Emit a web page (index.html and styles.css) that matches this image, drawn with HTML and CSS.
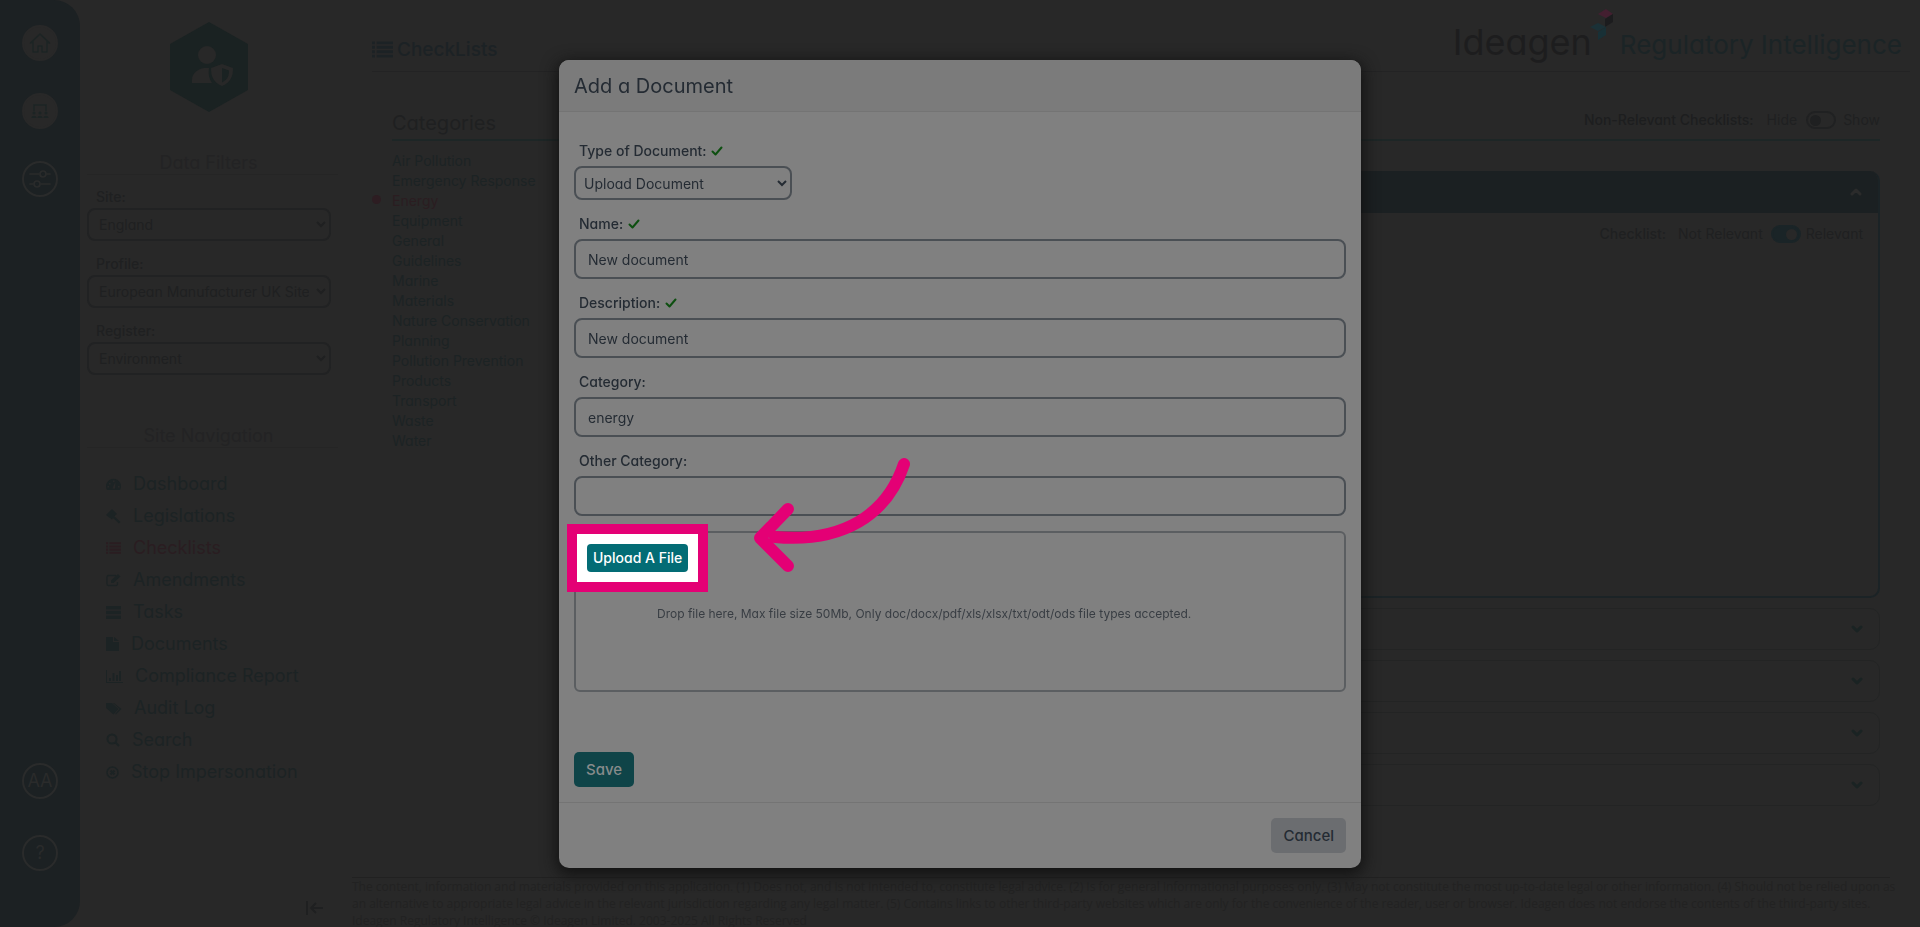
FILE: index.html
```html
<!DOCTYPE html>
<html lang="en">
<head>
<meta charset="utf-8">
<title>CheckLists - Add a Document</title>
<link rel="stylesheet" href="styles.css">
</head>
<body>
<svg class="defs" aria-hidden="true">
  <symbol id="i-list" viewBox="0 0 22 17"><path d="M0 0h3v3H0zM5 0h17v3H5zM0 4.700h3v3H0zM5 4.700h17v3H5zM0 9.400h3v3H0zM5 9.400h17v3H5zM0 14h3v3H0zM5 14h17v3H5z"/></symbol>
  <symbol id="i-down" viewBox="0 0 12 8"><path d="M2 2l4 4 4-4" fill="none" stroke="currentColor" stroke-width="3" stroke-linecap="round" stroke-linejoin="round"/></symbol>
  <symbol id="i-check" viewBox="0 0 12 10"><path d="M1.500 5.500l3 3 6-7" fill="none" stroke="currentColor" stroke-width="2" stroke-linecap="round" stroke-linejoin="round"/></symbol>
</svg>

<div class="app">
  <nav class="rail" aria-label="Applications">
    <a class="disc disc-solid" href="#" aria-label="Home"><svg width="22" height="22" viewBox="0 0 22 22" fill="none" stroke="currentColor" stroke-width="1.500" stroke-linejoin="round" stroke-linecap="round"><path d="M4 9.500L1.500 11 11 2l9.500 9L18 9.500M4 9.500V20h5v-6h4v6h5V9.500"/></svg></a>
    <a class="disc disc-solid" href="#" aria-label="Meetings"><svg width="18" height="16" viewBox="0 0 18 16" fill="none" stroke="currentColor" stroke-width="1.500"><path d="M3 8V2h12v6"/><g fill="currentColor" stroke="none"><circle cx="3" cy="10" r="1.500"/><circle cx="9" cy="10" r="1.500"/><circle cx="15" cy="10" r="1.500"/><path d="M.5 15c0-3 5-3 5 0zM6.500 15c0-3 5-3 5 0zM12.500 15c0-3 5-3 5 0z"/></g></svg></a>
    <a class="disc" href="#" aria-label="Settings"><svg width="22" height="18" viewBox="0 0 22 18" fill="none" stroke="currentColor" stroke-width="1.700" stroke-linecap="round"><path d="M1 4h9M18 4h3M1 14h3M12 14h9"/><circle cx="14" cy="4" r="3"/><circle cx="8" cy="14" r="3"/></svg></a>
    <a class="disc disc-user" href="#">AA</a>
    <a class="disc disc-help" href="#">?</a>
  </nav>

  <aside class="side">
    <svg class="badge" width="78" height="90" viewBox="0 0 78 90"><path class="badge-bg" d="M39 0l39 22v46L39 90 0 68V22z"/><g class="badge-fg"><circle cx="37" cy="33" r="9"/><path d="M22 61v-3c0-7 6-11 12-12h5c-1 6 0 11 3 15z"/><path d="M52 42l11 4c0 8-2 14-11 18-9-4-11-10-11-18z"/></g><path class="badge-bg" d="M52 46l7 2.500c0 5-1 9-7 12z"/></svg>
    <h2 class="side-title">Data Filters</h2>
    <form class="filters">
      <label for="site">Site:</label>
      <select id="site"><option>England</option></select>
      <label for="profile">Profile:</label>
      <select id="profile"><option>European Manufacturer UK Site</option></select>
      <label for="register">Register:</label>
      <select id="register"><option>Environment</option></select>
    </form>
    <h2 class="side-title side-title-nav">Site Navigation</h2>
    <ul class="nav">
      <li><a href="#"><svg width="15" height="13" viewBox="0 0 15 13"><path fill-rule="evenodd" d="M1 12a7.500 7.500 0 1 1 13 0zM6.500 10.500h2.500L9.500 4l-2 4zM3 5h1.500v1.500H3zM7 2.500h1.500V4H7zM1.500 8H3v1.500H1.500zM12 8h1.500v1.500H12z"/></svg>Dashboard</a></li>
      <li><a href="#"><svg width="15" height="15" viewBox="0 0 15 15"><path d="M6 0l5 5-1.500 1L8.500 7.500 14.500 13 13 14.500 7 9l-1 1.500L0 6z"/></svg>Legislations</a></li>
      <li><a class="current" href="#"><svg width="15" height="12"><use href="#i-list"/></svg>Checklists</a></li>
      <li><a href="#"><svg width="15" height="13" viewBox="0 0 15 13"><path d="M10 1.500H2.500a1.500 1.500 0 0 0-1.500 1.500v7a1.500 1.500 0 0 0 1.500 1.500h7.500a1.500 1.500 0 0 0 1.500-1.500V8" fill="none" stroke="currentColor" stroke-width="1.300"/><path d="M5 9V6.500L12 0l2.500 2.500L7.500 9z"/></svg>Amendments</a></li>
      <li><a href="#"><svg width="15" height="13" viewBox="0 0 15 13"><path d="M0 0h15v3.500H0zM0 4.700h15v3.500H0zM0 9.400h15v3.500H0z"/></svg>Tasks</a></li>
      <li><a href="#"><svg width="13" height="14" viewBox="0 0 13 14"><path d="M0 0h7v5h6v9H0zM8 0l5 4H8z"/></svg>Documents</a></li>
      <li><a href="#"><svg width="17" height="13" viewBox="0 0 17 13"><path d="M0 0h1v12h16v1H0zM3 8h2v3H3zM6.500 3h2v8h-2zM10 5h2v6h-2zM13 1h2v10h-2z"/></svg>Compliance Report</a></li>
      <li><a href="#"><svg width="16" height="13" viewBox="0 0 16 13"><path d="M0 1h6l6.500 6-5 5.500L0 6zM8 1l7.500 6-5.500 5.500-1-.5L13.500 7 7 1z"/></svg>Audit Log</a></li>
      <li><a href="#"><svg width="14" height="14" viewBox="0 0 14 14" fill="none" stroke="currentColor" stroke-width="2"><circle cx="6" cy="6" r="4.500"/><path d="M9.500 9.500L13 13"/></svg>Search</a></li>
      <li><a href="#"><svg width="13" height="13" viewBox="0 0 13 13" fill="none" stroke="currentColor" stroke-width="1.500"><circle cx="6.500" cy="6.500" r="5.500"/><path d="M4.500 4.500l4 4M8.500 4.500l-4 4" stroke-width="2"/></svg>Stop Impersonation</a></li>
    </ul>
    <button class="collapse" type="button" aria-label="Collapse menu"><svg width="17" height="14" viewBox="0 0 17 14" fill="none" stroke="currentColor" stroke-width="1.800"><path d="M1 0v14M17 7H5M10 2L5 7l5 5"/></svg></button>
  </aside>

  <main class="main">
    <header class="top">
      <h1><svg width="21" height="17"><use href="#i-list"/></svg>CheckLists</h1>
      <div class="brand">
        <span class="brand-name">Ideagen</span>
        <svg class="brand-mark" width="24" height="32" viewBox="0 0 24 32"><path fill="#431f30" d="M8 5l8-5 7 5-7 4z"/><path fill="#1c1c1e" d="M15 10l8-5v8l-8 5z"/><path fill="#1b3137" d="M0 18l8-4 8 4-8 4z"/><path fill="#183036" d="M8 23l8-5v8l-8 5z"/></svg>
        <span class="brand-product">Regulatory Intelligence</span>
      </div>
    </header>

    <div class="columns">
      <section class="cats">
        <h2>Categories</h2>
        <ul>
          <li><a href="#">Air Pollution</a></li>
          <li><a href="#">Emergency Response</a></li>
          <li><a class="current" href="#">Energy</a></li>
          <li><a href="#">Equipment</a></li>
          <li><a href="#">General</a></li>
          <li><a href="#">Guidelines</a></li>
          <li><a href="#">Marine</a></li>
          <li><a href="#">Materials</a></li>
          <li><a href="#">Nature Conservation</a></li>
          <li><a href="#">Planning</a></li>
          <li><a href="#">Pollution Prevention</a></li>
          <li><a href="#">Products</a></li>
          <li><a href="#">Transport</a></li>
          <li><a href="#">Waste</a></li>
          <li><a href="#">Water</a></li>
        </ul>
      </section>
      <section class="lists">
        <div class="lists-head">
          <b>Non-Relevant Checklists:</b>
          <span>Hide</span>
          <label class="switch-label"><input class="switch" type="checkbox">Show</label>
        </div>
        <article class="panel">
          <button class="panel-head" type="button" aria-label="Collapse checklist"><svg class="flip" width="12" height="8"><use href="#i-down"/></svg></button>
          <div class="panel-body">
            <b>Checklist:</b>
            <span>Not Relevant</span>
            <label class="switch-label tight"><input class="switch" type="checkbox" checked>Relevant</label>
          </div>
        </article>
        <button class="row" type="button" aria-label="Expand checklist"><svg width="12" height="8"><use href="#i-down"/></svg></button>
        <button class="row" type="button" aria-label="Expand checklist"><svg width="12" height="8"><use href="#i-down"/></svg></button>
        <button class="row" type="button" aria-label="Expand checklist"><svg width="12" height="8"><use href="#i-down"/></svg></button>
        <button class="row" type="button" aria-label="Expand checklist"><svg width="12" height="8"><use href="#i-down"/></svg></button>
      </section>
    </div>

    <footer class="legal">
      <p>The content, information and materials provided on this application. (1) Does not, and is not intended to, constitute legal advice. (2) Is for general informational purposes only. (3) May not constitute the most up-to-date legal or other information. (4) Should not be relied upon as</p>
      <p>an alternative to appropriate legal advice in the relevant jurisdiction regarding any legal matter. (5) Contains links to other third-party websites which are only for the convenience of the reader, user or browser. Ideagen does not endorse the contents of the third-party sites.</p>
      <p>Ideagen Regulatory Intelligence © Ideagen Limited. 2003-2025 All Rights Reserved</p>
    </footer>
  </main>
</div>

<div class="overlay">
  <form class="modal" role="dialog" aria-labelledby="modal-title">
    <h2 class="modal-title" id="modal-title">Add a Document</h2>
    <div class="modal-body">
      <div class="field">
        <label for="type">Type of Document: <svg width="12" height="10"><use href="#i-check"/></svg></label>
        <select id="type"><option>Upload Document</option></select>
      </div>
      <div class="field">
        <label for="name">Name: <svg width="12" height="10"><use href="#i-check"/></svg></label>
        <input id="name" type="text" value="New document">
      </div>
      <div class="field">
        <label for="desc">Description: <svg width="12" height="10"><use href="#i-check"/></svg></label>
        <input id="desc" type="text" value="New document">
      </div>
      <div class="field">
        <label for="cat">Category:</label>
        <input id="cat" type="text" value="energy">
      </div>
      <div class="field">
        <label for="other">Other Category:</label>
        <input id="other" type="text">
      </div>
      <div class="drop">
        <div class="spot"><button class="upload" type="button">Upload A File</button></div>
        <svg class="arrow" width="158" height="116" viewBox="0 0 158 116" fill="none" stroke="#e40075" stroke-width="12" stroke-linecap="round" stroke-linejoin="round"><path d="M151 7C134 58 90 86 22 80M35 52L7 81l28 28"/></svg>
        <p>Drop file here, Max file size 50Mb, Only doc/docx/pdf/xls/xlsx/txt/odt/ods file types accepted.</p>
      </div>
      <button class="btn save" type="submit">Save</button>
    </div>
    <div class="modal-foot"><button class="btn cancel" type="button">Cancel</button></div>
  </form>
</div>
</body>
</html>
```

FILE: styles.css
```css
* { box-sizing: border-box; }
body, h1, h2, p, ul { margin: 0; padding: 0; }
ul { list-style: none; }
a { color: inherit; text-decoration: none; }
svg { flex: none; fill: currentColor; }
svg[fill="none"] { fill: none; }
button, input, select { font: inherit; color: inherit; }
b { font-weight: 500; }

body {
  background: #282828;
  color: #1f2021;
  font: 14px/20px Inter, "Liberation Sans", sans-serif;
  font-feature-settings: "cv11";
  overflow: hidden;
}
.defs { position: absolute; width: 0; height: 0; }
.app { display: flex; height: 100vh; }

/* Icon rail */
.rail {
  display: flex;
  flex-direction: column;
  align-items: center;
  gap: 32px;
  width: 80px;
  padding: 25px 0 56px;
  background: #1c2123;
  border-radius: 0 26px 26px 0;
}
.disc {
  display: flex;
  align-items: center;
  justify-content: center;
  width: 36px;
  height: 36px;
  border: 2px solid #2a2b2b;
  border-radius: 50%;
  color: #2a2b2b;
  font-size: 18px;
}
.disc-solid { background: #282828; border-color: #282828; color: #1c2424; }
.disc-user { margin-top: auto; }
.disc-help { margin-top: 4px; }

/* Sidebar */
.side {
  display: flex;
  flex-direction: column;
  width: 272px;
  padding: 22px 14px 12px 7px;
}
.badge { align-self: center; margin-right: 8px; }
.badge-bg { fill: #1a2222; }
.badge-fg { fill: #282828; }
.side-title {
  margin-top: 39px;
  padding-right: 8px;
  border-bottom: 1px solid #252525;
  color: #232324;
  font-size: 18px;
  font-weight: 400;
  line-height: 23px;
  text-align: center;
}
.side-title-nav { margin-top: 38px; }
.filters { display: flex; flex-direction: column; margin-right: 7px; padding-top: 10px; }
.filters label { padding-left: 9px; line-height: 23px; font-weight: 500; }
.filters select {
  height: 33px;
  margin-bottom: 11px;
  padding: 0 4px 0 6px;
  background: #282828;
  border: 2px solid #212223;
  border-radius: 8px;
}
.nav { padding: 20px 0 0 19px; color: #1c2324; font-size: 18px; }
.nav a { display: flex; align-items: center; gap: 12px; height: 32px; line-height: 32px; }
.nav .current { color: #2a1d21; }
.collapse {
  display: flex;
  align-self: flex-end;
  margin: auto 15px 0 0;
  padding: 0;
  background: none;
  border: 0;
}

/* Main area */
.main { display: flex; flex: 1; flex-direction: column; min-width: 0; }
.top {
  display: flex;
  align-items: center;
  justify-content: space-between;
  height: 72px;
  margin: 0 10px 0 20px;
  padding-right: 8px;
  border-bottom: 1px solid #232324;
}
.top h1 {
  display: flex;
  align-items: center;
  gap: 4px;
  padding-top: 28px;
  color: #1c2225;
  font-size: 19px;
  font-weight: 500;
}
.brand { display: flex; align-items: flex-end; height: 100%; padding-bottom: 9px; line-height: 40px; }
.brand-name { color: #1d1d1e; font-size: 36px; }
.brand-mark { align-self: flex-start; margin: 9px 6px 0 -2px; }
.brand-product { color: #1b2426; font-size: 26px; line-height: 35px; }

.columns { display: grid; grid-template-columns: 260px 1fr; padding: 0 40px; }
.cats h2, .lists-head {
  height: 69px;
  border-bottom: 2px solid #1d2626;
}
.cats h2 { padding-top: 38px; color: #1f2021; font-size: 20px; font-weight: 400; line-height: 26px; }
.cats ul { padding-top: 10px; color: #1c2324; }
.cats .current { position: relative; color: #2b1d21; }
.cats .current::before {
  content: "";
  position: absolute;
  left: -20px;
  top: 3px;
  width: 9px;
  height: 9px;
  border-radius: 50%;
  background: #2d1d22;
}
.lists { display: flex; flex-direction: column; gap: 10px; }
.lists-head { display: flex; justify-content: flex-end; gap: 13px; margin-bottom: 20px; padding-top: 38px; }
.lists-head b { color: #1d1e1f; }
.switch-label { display: flex; align-items: center; gap: 7px; height: 20px; }
.tight { gap: 5px; }
.switch {
  appearance: none;
  display: flex;
  align-items: center;
  width: 30px;
  height: 18px;
  margin: 0 0 0 -4px;
  padding: 0 2px;
  border: 2px solid #202122;
  border-radius: 9px;
}
.switch::before { content: ""; width: 11px; height: 11px; border-radius: 50%; background: #1f2021; }
.switch:checked { justify-content: flex-end; background: #1a2427; border-color: #1a2427; }
.switch:checked::before { background: #282828; }
.panel { height: 427px; border: 2px solid #1b2326; border-top: 0; border-radius: 10px; overflow: hidden; }
.panel-head {
  display: flex;
  align-items: center;
  justify-content: flex-end;
  width: 100%;
  height: 42px;
  padding: 0 16px;
  background: #1b2022;
  border: 0;
  color: #2b2b2b;
}
.flip { transform: rotate(180deg); }
.panel-body { display: flex; justify-content: flex-end; gap: 12px; padding: 11px 15px; }
.row {
  display: flex;
  align-items: center;
  justify-content: flex-end;
  height: 42px;
  padding: 0 16px;
  background: none;
  border: 1px solid #232424;
  border-radius: 10px;
  color: #1a2323;
}
.legal {
  height: 50px;
  margin: auto 30px 0 0;
  border-top: 1px solid #212121;
  color: #222;
  font-family: "Open Sans", "Liberation Sans", sans-serif;
  font-size: 12px;
  line-height: 17px;
  white-space: nowrap;
}

/* Dialog */
.overlay { position: fixed; inset: 0; display: flex; justify-content: center; align-items: flex-start; padding-top: 60px; }
.modal {
  width: 802px;
  background: #808080;
  border-radius: 10px;
  box-shadow: 0 4px 16px 2px #111;
  color: #242b33;
}
.modal-title {
  padding: 13px 15px 12px;
  border-bottom: 1px solid #747474;
  border-radius: 10px 10px 0 0;
  background: #7b7b7b;
  font-size: 20px;
  font-weight: 400;
  line-height: 26px;
}
.modal-body { display: flex; flex-direction: column; padding: 27px 15px 15px; }
.field { display: flex; flex-direction: column; align-items: flex-start; margin-bottom: 12px; }
.field label { margin-bottom: 4px; padding-left: 5px; font-weight: 500; line-height: 23px; }
.field label svg { margin-left: 1px; color: #0d4f10; }
.field select, .field input {
  background: #808080;
  border: 2px solid #4a4f54;
  border-radius: 8px;
}
.field select { width: 218px; height: 34px; padding: 0 4px; }
.field input { width: 100%; height: 40px; padding: 0 12px; }
.drop {
  position: relative;
  height: 161px;
  margin-top: 3px;
  padding: 71px 0 0 81px;
  border: 2px solid #5b5e61;
  border-radius: 6px;
  color: #383d43;
  font-size: 12px;
}
.spot {
  position: absolute;
  left: -9px;
  top: -9px;
  padding: 10px;
  background: #fff;
  border: 10px solid #e40075;
}
.upload {
  display: block;
  height: 28px;
  padding: 0 6px;
  background: #036c75;
  border: 0;
  border-radius: 4px;
  color: #fff;
  font-size: 14px;
  font-weight: 500;
}
.arrow { position: absolute; left: 177px; top: -76px; }
.btn { height: 35px; padding: 0 12px; border: 0; border-radius: 5px; font-size: 15px; font-weight: 500; }
.save { align-self: flex-start; margin-top: 60px; background: #0f4448; color: #878b8b; }
.modal-foot { display: flex; justify-content: flex-end; padding: 15px; border-top: 1px solid #747474; }
.cancel { background: #6b6d70; }
```
